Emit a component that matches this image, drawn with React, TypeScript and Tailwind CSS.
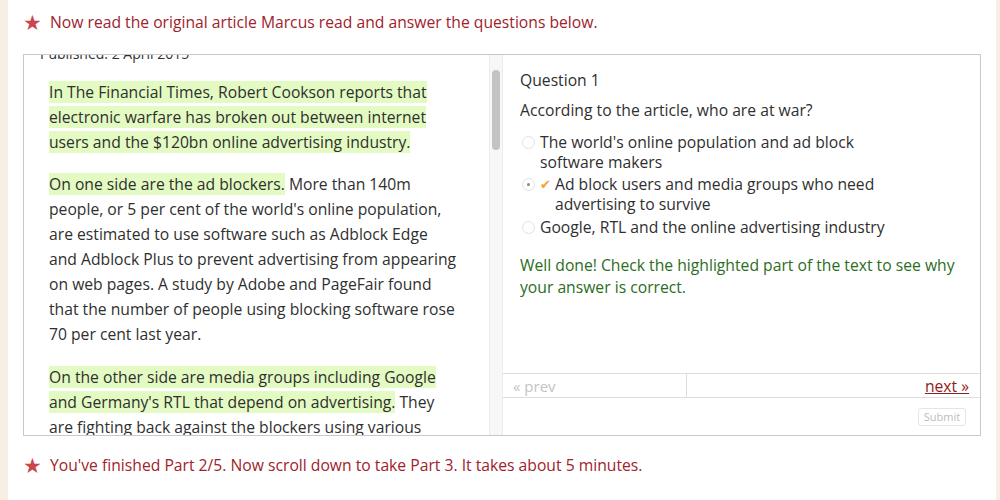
import React from "react";

const hl = "bg-[#e3fbc2]";

function Line({ children }: { children: React.ReactNode }) {
  return <div className="h-[25px] whitespace-nowrap leading-[25px]">{children}</div>;
}

function Radio({ selected }: { selected?: boolean }) {
  return (
    <span className="mt-[3px] flex h-[13px] w-[13px] shrink-0 items-center justify-center rounded-full border border-[#e2e2e2] bg-white">
      {selected && <span className="h-[3px] w-[3px] rounded-full bg-[#888]" />}
    </span>
  );
}

export default function App() {
  return (
    <div
      className="flex h-[500px] w-[1000px] bg-white text-[#2f2f2f]"
      style={{ fontFamily: '"Open Sans", "Liberation Sans", sans-serif' }}
    >
      <div className="w-[8px] shrink-0 bg-[#f8efe4]" />
      <div className="flex min-w-0 flex-1 flex-col">
        <div className="flex h-[54px] items-start pl-[15px] pt-[10px]">
          <span className="w-[27px] text-[21px] leading-[24px] text-[#c9464e]">★</span>
          <span className="text-[15.7px] leading-[24px] text-[#a0222b]">
            Now read the original article Marcus read and answer the questions below.
          </span>
        </div>

        <div className="mx-[15px] flex h-[382px] border border-[#c9c9c9]">
          {/* Article pane */}
          <div className="min-w-0 flex-1 overflow-hidden text-[15.7px]">
            <div className="-mt-[11px] pl-[16px] text-[14px] leading-[20px]">Published: 2 April 2015</div>
            <div className="mt-[16px] pl-[25px]">
              <div className="mb-[17px]">
                <Line><span className={hl}>In The Financial Times, Robert Cookson reports that</span></Line>
                <Line><span className={hl}>electronic warfare has broken out between internet</span></Line>
                <Line><span className={hl}>users and the $120bn online advertising industry.</span></Line>
              </div>
              <div className="mb-[18px]">
                <Line><span className={hl}>On one side are the ad blockers.</span> More than 140m</Line>
                <Line>people, or 5 per cent of the world's online population,</Line>
                <Line>are estimated to use software such as Adblock Edge</Line>
                <Line>and Adblock Plus to prevent advertising from appearing</Line>
                <Line>on web pages. A study by Adobe and PageFair found</Line>
                <Line>that the number of people using blocking software rose</Line>
                <Line>70 per cent last year.</Line>
              </div>
              <div>
                <Line><span className={hl}>On the other side are media groups including Google</span></Line>
                <Line><span className={hl}>and Germany's RTL that depend on advertising.</span> They</Line>
                <Line>are fighting back against the blockers using various</Line>
              </div>
            </div>
          </div>

          {/* Scrollbar */}
          <div className="w-[14px] shrink-0 border-x border-[#ececec] bg-[#f7f7f7]">
            <div className="mx-auto mt-[15px] h-[80px] w-[8px] rounded-full bg-[#c3c3c3]" />
          </div>

          {/* Question pane */}
          <div className="flex w-[477px] shrink-0 flex-col">
            <div className="flex-1 pl-[17px] pt-[13px] text-[15.7px]">
              <div className="leading-[24px]">Question 1</div>
              <div className="mt-[6px] leading-[24px]">According to the article, who are at war?</div>
              <div className="mt-[11px] pl-[2px] leading-[19.5px]">
                <div className="flex items-start gap-[5px]">
                  <Radio />
                  <span>
                    The world's online population and ad block
                    <br />
                    software makers
                  </span>
                </div>
                <div className="mt-[3px] flex items-start gap-[5px]">
                  <Radio selected />
                  <span className="mt-[1px] w-[10px] text-[13px] leading-[17px] text-[#f5a32a]">✔</span>
                  <span>
                    Ad block users and media groups who need
                    <br />
                    advertising to survive
                  </span>
                </div>
                <div className="mt-[4px] flex items-start gap-[5px]">
                  <Radio />
                  <span>Google, RTL and the online advertising industry</span>
                </div>
              </div>
              <div className="mt-[16px] leading-[22px] text-[#2a6d1c]">
                Well done! Check the highlighted part of the text to see why
                <br />
                your answer is correct.
              </div>
            </div>
            <div className="flex h-[25px] border-y border-[#dedede]">
              <div className="w-[184px] border-r border-[#dedede] pl-[10px] pt-[1px] text-[15px] leading-[22px] text-[#c4c4c4]">
                « prev
              </div>
              <div className="flex-1 pr-[11px] pt-[1px] text-right text-[15.7px] leading-[22px]">
                <span className="text-[#8f1c20] underline">next »</span>
              </div>
            </div>
            <div className="flex h-[37px] items-start justify-end pr-[14px] pt-[10px]">
              <div className="flex h-[18px] w-[48px] items-center justify-center rounded-[3px] border border-[#e4e4e4] text-[11px] text-[#bdbdbd]">
                Submit
              </div>
            </div>
          </div>
        </div>

        <div className="mt-[17px] flex items-start pl-[15px]">
          <span className="w-[27px] text-[21px] leading-[24px] text-[#c9464e]">★</span>
          <span className="text-[15.7px] leading-[24px] text-[#a0222b]">
            You've finished Part 2/5. Now scroll down to take Part 3. It takes about 5 minutes.
          </span>
        </div>
      </div>
      <div className="w-[4px] shrink-0 bg-[#f8efe4]" />
    </div>
  );
}
